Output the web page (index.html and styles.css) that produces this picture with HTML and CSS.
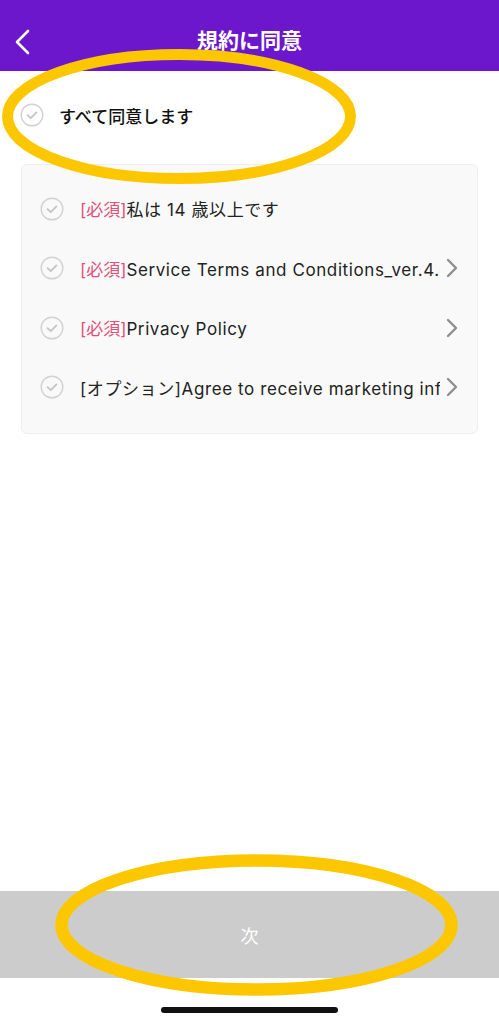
FILE: index.html
```html
<!DOCTYPE html>
<html lang="ja">
<head>
    <meta charset="UTF-8">
    <meta name="viewport" content="width=device-width, initial-scale=1.0">
    <title>規約に同意</title>
    <link rel="stylesheet" href="styles.css">
</head>
<body>
    <div class="page">
        <header class="topbar">
            <button class="back" aria-label="戻る">
                <svg width="16" height="26" viewBox="0 0 16 26"><path d="M14 2 L3 13 L14 24" fill="none" stroke="#fff" stroke-width="2.6" stroke-linecap="round" stroke-linejoin="round"/></svg>
            </button>
            <h1 class="title">規約に同意</h1>
        </header>

        <main class="content">
            <div class="all-row">
                <span class="check">
                    <svg width="24" height="24" viewBox="0 0 24 24"><circle cx="12" cy="12" r="10.8" fill="none" stroke="#d2d2d2" stroke-width="1.4"/><path d="M7.6 12.2 L10.8 15.2 L16.4 9.4" fill="none" stroke="#c4c4c4" stroke-width="1.8" stroke-linecap="round" stroke-linejoin="round"/></svg>
                </span>
                <span class="all-label">すべて同意します</span>
            </div>

            <div class="terms">
                <div class="term">
                    <span class="check">
                        <svg width="24" height="24" viewBox="0 0 24 24"><circle cx="12" cy="12" r="10.8" fill="none" stroke="#d2d2d2" stroke-width="1.4"/><path d="M7.6 12.2 L10.8 15.2 L16.4 9.4" fill="none" stroke="#c4c4c4" stroke-width="1.8" stroke-linecap="round" stroke-linejoin="round"/></svg>
                    </span>
                    <span class="term-text"><span class="req">[必須]</span>私は 14 歳以上です</span>
                </div>
                <div class="term">
                    <span class="check">
                        <svg width="24" height="24" viewBox="0 0 24 24"><circle cx="12" cy="12" r="10.8" fill="none" stroke="#d2d2d2" stroke-width="1.4"/><path d="M7.6 12.2 L10.8 15.2 L16.4 9.4" fill="none" stroke="#c4c4c4" stroke-width="1.8" stroke-linecap="round" stroke-linejoin="round"/></svg>
                    </span>
                    <span class="term-text"><span class="req">[必須]</span>Service Terms and Conditions_ver.4.0</span>
                    <svg class="arrow" width="12" height="20" viewBox="0 0 12 20"><path d="M2 2 L10 10 L2 18" fill="none" stroke="#8e8e8e" stroke-width="2.4" stroke-linecap="round" stroke-linejoin="round"/></svg>
                </div>
                <div class="term">
                    <span class="check">
                        <svg width="24" height="24" viewBox="0 0 24 24"><circle cx="12" cy="12" r="10.8" fill="none" stroke="#d2d2d2" stroke-width="1.4"/><path d="M7.6 12.2 L10.8 15.2 L16.4 9.4" fill="none" stroke="#c4c4c4" stroke-width="1.8" stroke-linecap="round" stroke-linejoin="round"/></svg>
                    </span>
                    <span class="term-text"><span class="req">[必須]</span>Privacy Policy</span>
                    <svg class="arrow" width="12" height="20" viewBox="0 0 12 20"><path d="M2 2 L10 10 L2 18" fill="none" stroke="#8e8e8e" stroke-width="2.4" stroke-linecap="round" stroke-linejoin="round"/></svg>
                </div>
                <div class="term">
                    <span class="check">
                        <svg width="24" height="24" viewBox="0 0 24 24"><circle cx="12" cy="12" r="10.8" fill="none" stroke="#d2d2d2" stroke-width="1.4"/><path d="M7.6 12.2 L10.8 15.2 L16.4 9.4" fill="none" stroke="#c4c4c4" stroke-width="1.8" stroke-linecap="round" stroke-linejoin="round"/></svg>
                    </span>
                    <span class="term-text">[オプション]Agree to receive marketing information</span>
                    <svg class="arrow" width="12" height="20" viewBox="0 0 12 20"><path d="M2 2 L10 10 L2 18" fill="none" stroke="#8e8e8e" stroke-width="2.4" stroke-linecap="round" stroke-linejoin="round"/></svg>
                </div>
            </div>
        </main>

        <footer class="bottom">
            <button class="next">次</button>
            <div class="home-area"><span class="home-bar"></span></div>
        </footer>

        <!-- 注釈の丸 -->
        <svg class="marks" width="499" height="1024" viewBox="0 0 499 1024">
            <ellipse cx="179" cy="116.5" rx="171.5" ry="62" fill="none" stroke="#fdc700" stroke-width="11"/>
            <ellipse cx="256.5" cy="925" rx="195" ry="64.5" fill="none" stroke="#fdc700" stroke-width="12.5"/>
        </svg>
    </div>
</body>
</html>
```

FILE: styles.css
```css
/* ベース */
body {
    margin: 0;
    padding: 0;
    font-family: Inter, "Noto Sans CJK JP", sans-serif;
    color: #222;
    background: #fff;
}
.page {
    position: relative;
    width: 499px;
    height: 1024px;
    display: flex;
    flex-direction: column;
    overflow: hidden;
}

/* ヘッダー */
.topbar {
    height: 71px;
    background-color: #6c17cc;
    display: flex;
    align-items: center;
    justify-content: center;
    position: relative;
    flex-shrink: 0;
}
.back {
    position: absolute;
    left: 14px;
    top: 29px;
    padding: 0;
    border: none;
    background: none;
    display: flex;
}
.title {
    margin: 7px 0 0;
    color: #fff;
    font-size: 21px;
    font-weight: 700;
}

/* 本文 */
.content {
    flex: 1;
}
.all-row {
    height: 88px;
    display: flex;
    align-items: center;
    padding-left: 20px;
}
.check {
    display: flex;
    width: 24px;
    height: 24px;
    flex-shrink: 0;
}
.all-label {
    margin-left: 15px;
    font-size: 17px;
    font-weight: 500;
    color: #111;
}
.terms {
    margin: 5px 21px 0;
    padding: 14px 0 16px;
    background-color: #f9f9f9;
    border: 1px solid #eeeeee;
    border-radius: 6px;
}
.term {
    height: 59.5px;
    display: flex;
    align-items: center;
    padding: 0 19px 0 18px;
}
.term-text {
    flex: 1;
    margin-left: 16px;
    font-size: 17px;
    letter-spacing: 0.6px;
    white-space: nowrap;
    overflow: hidden;
    color: #222;
}
.req {
    color: #e2507a;
    letter-spacing: 0;
}
.arrow {
    flex-shrink: 0;
    margin-left: 6px;
}

/* 下部ボタン */
.bottom {
    flex-shrink: 0;
}
.next {
    display: block;
    width: 100%;
    height: 87px;
    border: none;
    background-color: #cccccc;
    color: #fff;
    font-family: "Noto Sans CJK JP", sans-serif;
    font-size: 18px;
    padding: 0;
}
.home-area {
    height: 46px;
    display: flex;
    justify-content: center;
    padding-top: 29px;
    box-sizing: border-box;
}
.home-bar {
    width: 177px;
    height: 6px;
    border-radius: 3px;
    background-color: #111;
}

/* 注釈 */
.marks {
    position: absolute;
    left: 0;
    top: 0;
    pointer-events: none;
}
```
